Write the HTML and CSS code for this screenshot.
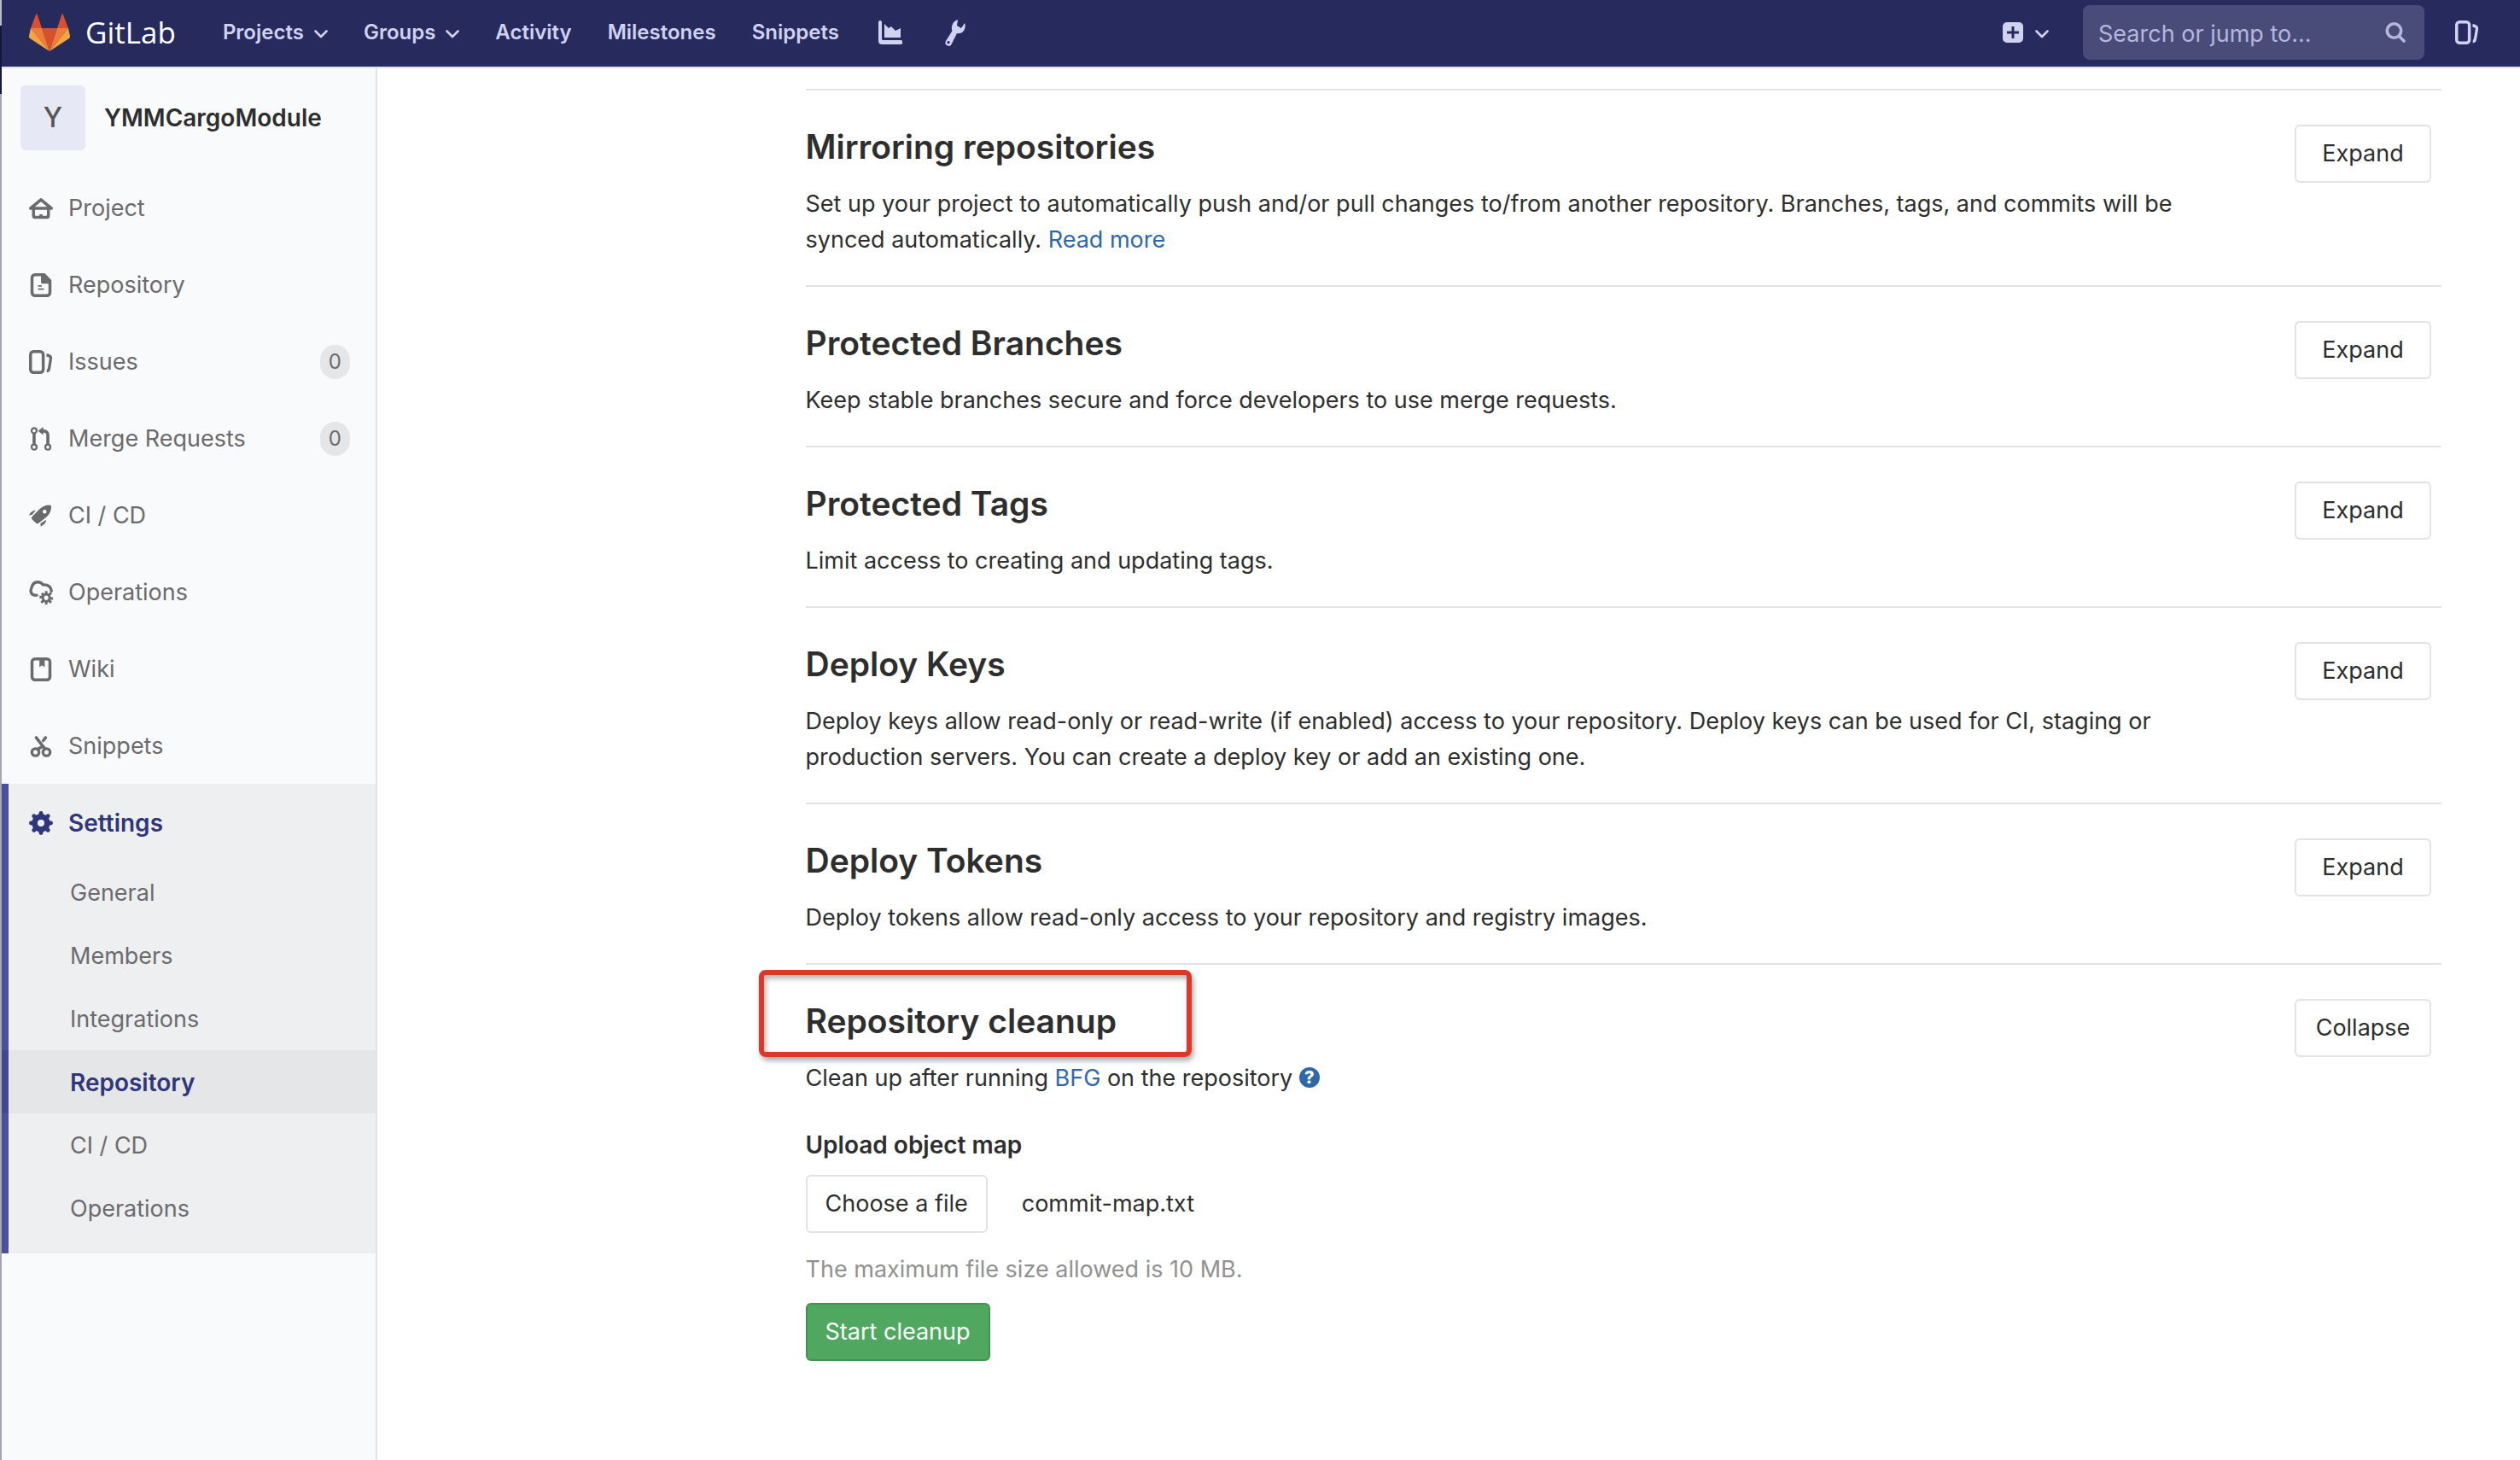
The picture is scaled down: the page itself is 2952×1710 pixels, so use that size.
FILE: index.html
```
<!DOCTYPE html>
<html lang="en">
<head>
<meta charset="utf-8">
<title>Repository settings · YMMCargoModule · GitLab</title>
<link rel="stylesheet" href="styles.css">
</head>
<body>
<svg class="sprite" aria-hidden="true">
  <symbol id="chevron" viewBox="0 0 16 10"><path d="M1.500 1.500l6.500 6.500 6.500-6.500" fill="none" stroke="currentColor" stroke-width="2.600" stroke-linecap="round" stroke-linejoin="round"/></symbol>
  <symbol id="issues" viewBox="0 0 16 16"><path fill-rule="evenodd" d="M3 0h4.500a3 3 0 0 1 3 3v10a3 3 0 0 1-3 3H3a3 3 0 0 1-3-3V3a3 3 0 0 1 3-3zm0 2a1 1 0 0 0-1 1v10a1 1 0 0 0 1 1h4.500a1 1 0 0 0 1-1V3a1 1 0 0 0-1-1zm8.700.3l1.700.4a2.700 2.700 0 0 1 2.100 3.100l-1.200 7a2.700 2.700 0 0 1-2.600 2.200l.3-2.200a.8.8 0 0 0 .5-.5l1.100-6.600a.9.900 0 0 0-.6-1l-1.300-.3z"/></symbol>
</svg>
<header class="navbar">
  <a class="brand" href="#">
    <svg class="tanuki" viewBox="0 0 48 44" aria-hidden="true">
      <path fill="#d9502c" d="M24 44L15 17h18z"/>
      <path fill="#ee7d3b" d="M24 44L15 17H2zM24 44l9-27h13z"/>
      <path fill="#f3a542" d="M2 17l-2 9c0 1 0 2 1 3l23 15zM46 17l2 9c0 1 0 2-1 3L24 44z"/>
      <path fill="#d9502c" d="M2 17h13L9.500.5Q9 0 8.300.5zM46 17H33L38.500.5Q39 0 39.700.5z"/>
    </svg>
    <span>GitLab</span>
  </a>
  <nav class="nav-links" aria-label="Main">
    <a href="#">Projects<svg class="chevron"><use href="#chevron"/></svg></a>
    <a href="#">Groups<svg class="chevron"><use href="#chevron"/></svg></a>
    <a href="#">Activity</a>
    <a href="#">Milestones</a>
    <a href="#">Snippets</a>
    <a class="stats" href="#" aria-label="Instance statistics"><svg class="nav-icon" viewBox="0 0 28 28"><path d="M2 0a2 2 0 0 1 2 2v20a2 2 0 0 0 1 1h21a2.500 2.500 0 0 1 0 5H4a4 4 0 0 1-4-4V2a2 2 0 0 1 2-2z"/><path d="M7 20V4l5 5 3-2 5 5 6-3v11z"/></svg></a>
    <a class="wrench" href="#" aria-label="Admin area"><svg viewBox="0 0 24 32"><path fill-rule="evenodd" d="M15 1q-6 2-7 8-.5 3 .5 5L1 26q-2 4 2 5.500T8 29l6-12q7 1 9-5 1.500-4 0-7l-4 6-5-3zM4 26a1.600 1.600 0 1 0 .1 0z"/></svg></a>
  </nav>
  <div class="nav-tools">
    <button class="new-menu" type="button" aria-label="New">
      <svg class="plus" viewBox="0 0 24 24"><path fill-rule="evenodd" d="M5 0h14a5 5 0 0 1 5 5v14a5 5 0 0 1-5 5H5a5 5 0 0 1-5-5V5a5 5 0 0 1 5-5zm5.500 5v5.500H5v3h5.500V19h3v-5.500H19v-3h-5.500V5z"/></svg>
      <svg class="chevron"><use href="#chevron"/></svg>
    </button>
    <form class="search">
      <input type="search" aria-label="Search or jump to" placeholder="Search or jump to...">
      <svg class="magnifier" viewBox="0 0 24 24"><g fill="none" stroke="currentColor" stroke-width="3.600" stroke-linecap="round"><circle cx="10.500" cy="10" r="8.200"/><path d="M16.500 16.500l5.500 5.500"/></g></svg>
    </form>
    <a href="#" aria-label="Issues"><svg class="nav-icon"><use href="#issues"/></svg></a>
  </div>
</header>

<div class="page">
  <aside class="sidebar">
    <a class="project" href="#"><span class="avatar">Y</span><strong>YMMCargoModule</strong></a>
    <nav class="menu" aria-label="Project">
      <a href="#"><svg viewBox="0 0 16 16"><path fill-rule="evenodd" d="M7.200 1.500a1.300 1.300 0 0 1 1.600 0l6.800 5.600c.8.700.300 1.900-.7 1.900H14v4.200a1.900 1.900 0 0 1-1.900 1.800H3.900A1.900 1.900 0 0 1 2 13.200V9h-.9C.1 9-.4 7.800.4 7.100zM8 3.500L3.900 7h8.200zM4 9v3.500c0 .3.200.5.500.5H7v-1h2v1h2.500c.3 0 .5-.2.500-.5V9z"/></svg>Project</a>
      <a href="#"><svg viewBox="0 0 16 16"><path fill-rule="evenodd" d="M4 0h6.500L15 4.500V13a3 3 0 0 1-3 3H4a3 3 0 0 1-3-3V3a3 3 0 0 1 3-3zm0 2a1 1 0 0 0-1 1v10a1 1 0 0 0 1 1h8a1 1 0 0 0 1-1V7H9.500A1.500 1.500 0 0 1 8 5.500V2zm2 6h2.500v1H6zm0 2.200h4v1H6z"/></svg>Repository</a>
      <a href="#"><svg><use href="#issues"/></svg>Issues<span class="badge">0</span></a>
      <a href="#"><svg viewBox="0 0 16 16"><g fill="none" stroke="currentColor" stroke-width="1.300"><circle cx="3.400" cy="2.500" r="1.700"/><circle cx="3.400" cy="13.500" r="1.700"/><circle cx="12.600" cy="13.500" r="1.700"/></g><path d="M3.400 4.500v7M12.600 11.500V5.300a2.500 2.500 0 0 0-2.500-2.500H9" fill="none" stroke="currentColor" stroke-width="2.100"/><path d="M9.500 0v5.400L6 2.700z"/></svg>Merge Requests<span class="badge">0</span></a>
      <a href="#"><svg viewBox="0 0 16 16"><path fill-rule="evenodd" d="M13.500.9q1.600-.1 1.400 1.500-.1 3.200-3 6.300L6.500 13q-1 .7-1.800 0L2 10.400q-.7-.8 0-1.700L7 3.600Q10 .9 13.500.9zM10.400 4a1.300 1.300 0 1 0 .1 0z"/><path d="M4.500 4.300l-2.300 3L0 7.800q1-3 4.500-3.500zM11.500 10.700q0 2.800-3.700 4.600l-.1-2.200z"/></svg>CI / CD</a>
      <a href="#"><svg viewBox="0 0 16 16"><path d="M5.200 9.800H4A3 3 0 0 1 1.500 5.500Q2.300 1 5.800 1q2.400 0 3.500 1.800Q14.500 2.500 15 7" fill="none" stroke="currentColor" stroke-width="1.900" stroke-linecap="round"/><circle cx="11.500" cy="11.500" r="2.300" fill="none" stroke="currentColor" stroke-width="1.700"/><path d="M11.500 7v2M11.500 14v2M7 11h2M14 12h2M8.200 14.800l1.400-1.400M13.400 9.600l1.400-1.400M8.500 8.500l1 1M13.500 13.500l1.300 1.300" stroke="currentColor" stroke-width="1.700"/></svg>Operations</a>
      <a href="#"><svg viewBox="0 0 16 16"><path fill-rule="evenodd" d="M4 0h8a3 3 0 0 1 3 3v10a3 3 0 0 1-3 3H4a3 3 0 0 1-3-3V3a3 3 0 0 1 3-3zm0 2a1 1 0 0 0-1 1v10a1 1 0 0 0 1 1h8a1 1 0 0 0 1-1V3a1 1 0 0 0-1-1h-1.500v4.500L8.700 5.300 7 6.500V2z"/></svg>Wiki</a>
      <a href="#"><svg viewBox="0 0 16 16"><g fill="none" stroke="currentColor"><circle cx="4.300" cy="12" r="2.400" stroke-width="1.900"/><circle cx="11.700" cy="12" r="2.400" stroke-width="1.900"/><path d="M5.500 10L8 8.800M10.700 9.800L4.800 2.200M9.500 4.300l1.600-2.100" stroke-width="2" stroke-linecap="round"/></g></svg>Snippets</a>
    </nav>
    <div class="menu-active">
      <nav class="menu" aria-label="Settings">
        <a class="current" href="#"><svg viewBox="0 0 16 16"><circle cx="8" cy="8" r="4.200" fill="none" stroke="currentColor" stroke-width="3.800"/><path d="M8 1.400v2M8 12.600v2M1.400 8h2M12.600 8h2M3.300 3.300l1.400 1.400M11.300 11.300l1.400 1.400M3.300 12.700l1.400-1.400M11.300 4.700l1.400-1.400" stroke="currentColor" stroke-width="2.800" stroke-linecap="round"/></svg>Settings</a>
      </nav>
      <nav class="submenu" aria-label="Settings pages">
        <a href="#">General</a>
        <a href="#">Members</a>
        <a href="#">Integrations</a>
        <a class="current" href="#">Repository</a>
        <a href="#">CI / CD</a>
        <a href="#">Operations</a>
      </nav>
    </div>
  </aside>

  <main class="content">
    <section class="setting">
      <div class="setting-text">
        <h2>Mirroring repositories</h2>
        <p>Set up your project to automatically push and/or pull changes to/from another repository. Branches, tags, and commits will be synced automatically. <a href="#">Read more</a></p>
      </div>
      <button class="btn toggle" type="button">Expand</button>
    </section>
    <section class="setting">
      <div class="setting-text">
        <h2>Protected Branches</h2>
        <p>Keep stable branches secure and force developers to use merge requests.</p>
      </div>
      <button class="btn toggle" type="button">Expand</button>
    </section>
    <section class="setting">
      <div class="setting-text">
        <h2>Protected Tags</h2>
        <p>Limit access to creating and updating tags.</p>
      </div>
      <button class="btn toggle" type="button">Expand</button>
    </section>
    <section class="setting">
      <div class="setting-text">
        <h2>Deploy Keys</h2>
        <p>Deploy keys allow read-only or read-write (if enabled) access to your repository. Deploy keys can be used for CI, staging or production servers. You can create a deploy key or add an existing one.</p>
      </div>
      <button class="btn toggle" type="button">Expand</button>
    </section>
    <section class="setting">
      <div class="setting-text">
        <h2>Deploy Tokens</h2>
        <p>Deploy tokens allow read-only access to your repository and registry images.</p>
      </div>
      <button class="btn toggle" type="button">Expand</button>
    </section>
    <section class="setting">
      <div class="setting-text">
        <h2 class="marked">Repository cleanup</h2>
        <p>Clean up after running <a href="#">BFG</a> on the repository <a class="help" href="#" aria-label="Help"><span>?</span></a></p>
        <form class="cleanup">
          <label for="object-map">Upload object map</label>
          <div class="file-row">
            <button class="btn" id="object-map" type="button">Choose a file</button>
            <span>commit-map.txt</span>
          </div>
          <small>The maximum file size allowed is 10 MB.</small>
          <button class="btn btn-success" type="button">Start cleanup</button>
        </form>
      </div>
      <button class="btn toggle" type="button">Collapse</button>
    </section>
  </main>
</div>
</body>
</html>
```
FILE: styles.css
```
*,
*::after {
  box-sizing: border-box;
}

body {
  display: flex;
  flex-direction: column;
  min-height: 100vh;
  margin: 0;
  padding-left: 2px;
  /* window edge along the left side */
  background: linear-gradient(#b9bcc8 30px, #14163c 30px, #14163c 110px, #a5a7ae 110px) left / 2px 100% no-repeat #fff;
  color: #2e2e2e;
  font: 27px/42px Inter, "Liberation Sans", sans-serif;
}

a {
  color: #2e67ac;
  text-decoration: none;
}

button,
input {
  font: inherit;
}

svg {
  flex: none;
  fill: currentColor;
}

.sprite {
  position: absolute;
  width: 0;
  height: 0;
}

/* Top bar */
.navbar {
  display: flex;
  align-items: center;
  height: 80px;
  padding: 0 48px 2px 32px;
  border-bottom: 2px solid #e1e3ee;
  background: #262a5c;
  color: #d1d1f0;
}

.navbar a {
  display: flex;
  align-items: center;
  color: inherit;
}

.navbar .brand {
  gap: 18px;
  margin-right: 55px;
  color: #fff;
  font: 35px/48px "Open Sans", sans-serif;
}

.tanuki {
  width: 48px;
  height: 44px;
}

.nav-links {
  display: flex;
  align-items: center;
  gap: 42px;
  font-size: 24px;
  font-weight: 600;
}

.chevron {
  width: 16px;
  height: 10px;
  margin: 4px 0 0 12px;
}

.nav-icon {
  width: 28px;
  height: 28px;
}

.stats {
  margin-left: 4px;
}

.wrench svg {
  width: 24px;
  height: 32px;
  margin-left: 8px;
}

.nav-tools {
  display: flex;
  align-items: center;
  gap: 36px;
  margin-left: auto;
}

.new-menu {
  display: flex;
  align-items: center;
  margin-right: 4px;
  padding: 0;
  border: 0;
  background: none;
  color: inherit;
}

.new-menu .chevron {
  margin-left: 14px;
}

.plus,
.magnifier {
  width: 24px;
  height: 24px;
}

.search {
  display: flex;
  align-items: center;
  width: 400px;
  height: 64px;
  padding: 0 22px 0 18px;
  border-radius: 8px;
  background: #494c78;
  color: #b6b7dc;
}

.search input {
  flex: 1;
  min-width: 0;
  padding: 4px 0 0;
  border: 0;
  outline: 0;
  background: none;
  color: inherit;
}

.search input::placeholder {
  color: #b6b7dc;
}

/* Sidebar */
.page {
  display: flex;
  flex: 1;
}

.sidebar {
  flex: none;
  width: 440px;
  border-right: 2px solid #e3e4e8;
  background: #f9fafc;
  color: #6b6b6d;
}

.sidebar a {
  display: flex;
  align-items: center;
  padding-top: 2px;
  color: inherit;
}

.sidebar .project {
  gap: 22px;
  height: 118px;
  padding: 0 22px 2px;
  color: #2e2e2e;
}

.project strong {
  font-size: 28px;
  font-weight: 600;
}

.avatar {
  display: flex;
  align-items: center;
  justify-content: center;
  width: 76px;
  height: 76px;
  border-radius: 6px;
  background: #e6e9f5;
  color: #555;
  font-size: 32px;
  font-weight: 500;
}

.menu a {
  gap: 18px;
  height: 90px;
  padding-right: 30px;
  padding-left: 32px;
}

.menu svg {
  width: 28px;
  height: 28px;
}

.badge {
  margin-left: auto;
  padding: 0 10px;
  border-radius: 20px;
  background: #e5e6e8;
  font-size: 24px;
  line-height: 40px;
}

.menu-active {
  padding-bottom: 16px;
  background: #eeeff1;
  box-shadow: inset 8px 0 #4b4f9c;
}

.submenu a {
  height: 74px;
  padding-left: 80px;
}

.sidebar .current {
  color: #30367a;
  font-size: 28px;
  font-weight: 600;
}

.submenu .current {
  background: #e5e6e8;
  box-shadow: inset 8px 0 #43478f;
}

/* Settings sections */
.content {
  flex: 1;
  min-width: 0;
  padding: 24px 92px 0 17%;
}

.setting {
  display: flex;
  align-items: flex-start;
  justify-content: space-between;
  padding: 40px 12px 32px 0;
  border-top: 2px solid #e3e3e3;
}

.setting-text {
  max-width: 1640px;
}

.setting h2 {
  margin: 0 0 20px;
  font-size: 39px;
  font-weight: 600;
  line-height: 52px;
}

.setting p {
  margin: 0;
}

.btn {
  height: 68px;
  padding: 0 21px;
  border: 2px solid #e3e3e3;
  border-radius: 6px;
  background: #fff;
  color: #2e2e2e;
}

.toggle {
  flex: none;
  width: 160px;
  padding: 0;
}

.marked {
  position: relative;
}

/* Red frame drawn over the heading */
.marked::after {
  content: "";
  position: absolute;
  top: -34px;
  left: -55px;
  width: 507px;
  height: 102px;
  border: 6px solid #de3629;
  border-radius: 8px;
  box-shadow: 2px 4px 6px rgba(0, 0, 0, .35), inset 2px 4px 6px rgba(0, 0, 0, .3);
}

.help {
  display: inline-flex;
  align-items: center;
  justify-content: center;
  width: 24px;
  height: 24px;
  border-radius: 50%;
  background: #2e67ac;
  color: #fff;
  font-size: 20px;
  font-weight: 800;
  line-height: 24px;
  vertical-align: 3px;
}

.cleanup {
  display: flex;
  flex-direction: column;
  align-items: flex-start;
  margin-top: 36px;
}

.cleanup label {
  font-size: 28px;
  font-weight: 600;
}

.file-row {
  display: flex;
  align-items: center;
  gap: 40px;
  margin: 14px 0 22px;
}

.cleanup small {
  margin-bottom: 18px;
  color: #919191;
  font-size: 27px;
}

.btn-success {
  border-color: #43934f;
  background: #50a860;
  color: #fff;
}
```
